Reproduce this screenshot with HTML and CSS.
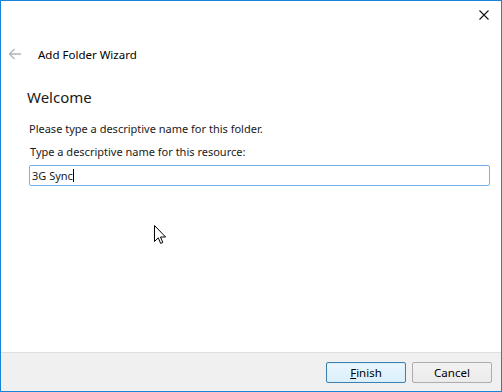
FILE: index.html
```html
<!DOCTYPE html>
<html lang="en">
<head>
  <meta charset="UTF-8">
  <title>Add Folder Wizard</title>
  <link rel="stylesheet" href="styles.css">
</head>
<body>
  <div class="window">
    <div class="titlebar">
      <span class="close-btn">
        <svg width="10" height="10" viewBox="0 0 10 10"><path d="M0.5 0.5 L9.5 9.5 M9.5 0.5 L0.5 9.5" stroke="#111" stroke-width="1.1" fill="none"/></svg>
      </span>
    </div>

    <div class="header">
      <svg class="back-arrow" width="14" height="12" viewBox="0 0 14 12"><path d="M13 6 H1.5 M6.5 1 L1.5 6 L6.5 11" stroke="#b4b4b4" stroke-width="1.3" fill="none"/></svg>
      <span class="wizard-title">Add Folder Wizard</span>
    </div>

    <div class="content">
      <h1>Welcome</h1>
      <p class="intro">Please type a descriptive name for this folder.</p>
      <label class="field-label">Type a descriptive name for this resource:</label>
      <div class="text-input">3G Sync<span class="caret"></span></div>
    </div>

    <div class="footer">
      <button class="btn btn-default"><u>F</u>inish</button>
      <button class="btn">Cancel</button>
    </div>

    <svg class="pointer" width="13" height="20" viewBox="0 0 13 20">
      <path d="M0.5 0.5 V16.5 L4.3 12.8 L6.6 18.4 L8.8 17.5 L6.5 12 H11.6 Z" fill="#fff" stroke="#000" stroke-width="1"/>
    </svg>
  </div>
</body>
</html>
```

FILE: styles.css
```css
body {
  margin: 0;
  font-family: 'Noto Sans', sans-serif;
  font-size: 11px;
  color: #1a1a1a;
}

.window {
  position: relative;
  width: 502px;
  height: 392px;
  box-sizing: border-box;
  border: 1px solid #1883d7;
  background: #fff;
  display: flex;
  flex-direction: column;
}

.titlebar {
  height: 38px;
  display: flex;
  align-items: flex-start;
  justify-content: flex-end;
}

.close-btn {
  width: 46px;
  height: 28px;
  display: flex;
  align-items: center;
  justify-content: center;
  margin-right: -6px;
}

.header {
  display: flex;
  align-items: center;
  height: 30px;
  padding-left: 7px;
}

.back-arrow {
  margin-right: 16px;
}

.wizard-title {
  font-size: 11.5px;
  color: #000;
}

.content {
  flex: 1;
  padding: 0 11px 0 27px;
}

h1 {
  font-weight: normal;
  font-size: 15px;
  line-height: 20px;
  color: #1a1a1a;
  margin: 18px 0 14px -1px;
}

.intro {
  line-height: 16px;
  margin: 0 0 7px 1px;
}

.field-label {
  display: block;
  line-height: 16px;
  margin: 0 0 5px 2px;
}

.text-input {
  height: 21px;
  box-sizing: border-box;
  border: 1px solid #78b1ea;
  border-radius: 2px;
  padding: 0 0 0 2px;
  display: flex;
  align-items: center;
  margin-left: 1px;
}

.caret {
  display: inline-block;
  width: 1px;
  height: 13px;
  background: #000;
}

.footer {
  height: 38px;
  background: #f0f0f0;
  border-top: 1px solid #dfdfdf;
  display: flex;
  justify-content: flex-end;
  align-items: center;
  gap: 6px;
  padding-right: 9px;
}

.btn {
  width: 80px;
  height: 21px;
  font-family: 'Noto Sans', sans-serif;
  font-size: 11.5px;
  color: #000;
  background: linear-gradient(#f2f2f2, #ebebeb);
  border: 1px solid #adadad;
  border-radius: 2px;
  padding: 0;
}

.btn-default {
  border-color: #3c7fb1;
  background: linear-gradient(#eaf6fd, #d9f0fc);
  box-shadow: inset 0 0 0 1px #dbeefa;
}

.pointer {
  position: absolute;
  left: 153px;
  top: 224px;
}
```
